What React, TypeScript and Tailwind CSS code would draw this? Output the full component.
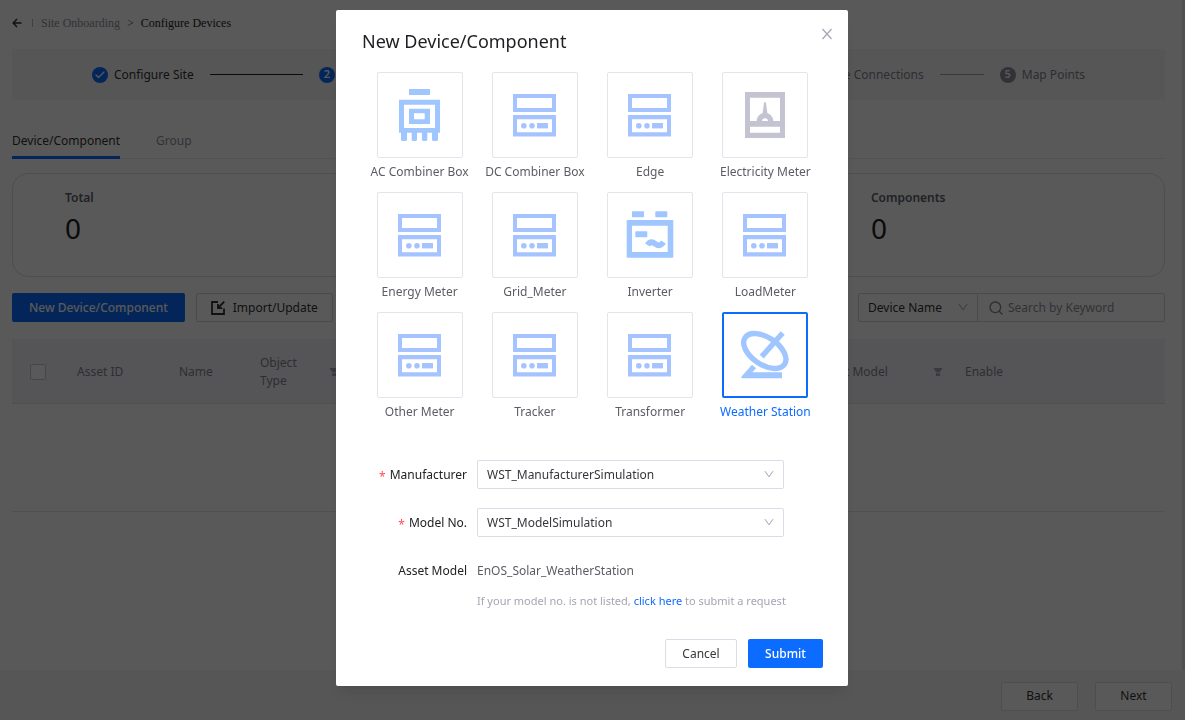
import { useState, type ReactNode } from 'react';
import { Check, Search } from 'lucide-react';

function RackIcon() {
  return (
    <svg viewBox="0 0 60 60" className="size-[60px]" fill="#a5c3ff" aria-hidden="true">
      <path fillRule="evenodd" d="M8 9h43v18H8zM12 13v10h35V13z" />
      <path fillRule="evenodd" d="M8 30h43v21.5H8zM12 34.3v13h35v-13z" />
      <circle cx="18.8" cy="40.8" r="2.8" />
      <circle cx="27" cy="40.8" r="2.8" />
      <path d="M32 38h11v5.400H32z" />
    </svg>
  );
}

function CombinerIcon() {
  return (
    <svg viewBox="0 0 60 60" className="size-[60px]" fill="#9fc6ff" aria-hidden="true">
      <rect x="19" y="4" width="21" height="6" rx="0.5" />
      <path fillRule="evenodd" d="M9 14.700h41v33H9zM14 19.700v23.300h31V19.700z" />
      <path fillRule="evenodd" d="M19 23.700h21V39H19zM24 28.300v6h10.700v-6z" />
      <path d="M11 47h6v8l-1 1h-4l-1-1zM21.700 47H27v8l-1 1h-3.300l-1-1zM31.900 47h5.400v8l-1 1h-3.400l-1-1zM42 47h6v8l-1 1h-4l-1-1z" />
    </svg>
  );
}

function ElectricityIcon() {
  return (
    <svg viewBox="0 0 60 60" className="size-[60px]" fill="#c4c3d1" aria-hidden="true">
      <path fillRule="evenodd" d="M10 7h40v46H10zM15 12.700V36h30V12.700zM15 41.700v6h30v-6z" />
      <path fillRule="evenodd" d="M21.700 36.200c0-4 2.500-7 5.900-8L29 18q1-2 2 0l1.400 10.200c3.400 1 5.900 4 5.900 8H33a3 3 0 0 0-6 0z" />
    </svg>
  );
}

function InverterIcon() {
  return (
    <svg viewBox="0 0 60 60" className="size-[60px]" fill="#9fc6ff" aria-hidden="true">
      <rect x="12" y="6.300" width="12" height="6" rx="0.8" />
      <rect x="35.300" y="6.300" width="12" height="6" rx="0.8" />
      <path fillRule="evenodd" d="M7.500 15h45q.8 0 .8.800v36.200q0 .8-.8.800h-45q-.8 0-.8-.8V15.800q0-.8.800-.8zM12 20.700V47h35.700V20.700z" />
      <rect x="15.300" y="26.300" width="12" height="6" rx="0.8" />
      <path d="M27.500 40c3-4.500 6-2.500 8-1s5 2.500 8-1.800" fill="none" stroke="#9fc6ff" strokeWidth="5.800" />
    </svg>
  );
}

function WeatherIcon() {
  return (
    <svg viewBox="0 0 60 60" className="size-[60px]" fill="#9fc6ff" aria-hidden="true">
      <ellipse cx="29.800" cy="26" rx="23.800" ry="13.600" transform="rotate(34 29.800 26)" fill="none" stroke="#9fc6ff" strokeWidth="5.400" />
      <path d="M26.700 31.600 47.700 8" stroke="#9fc6ff" strokeWidth="5.400" />
      <path d="m17 39.700 4 3.500-3.700 4.100H47v6H7q-1.300-.6-.4-1.800z" />
    </svg>
  );
}

function FilterIcon() {
  return (
    <svg viewBox="0 0 10 10" className="size-2.5" fill="#a8a8b4" aria-hidden="true">
      <path d="M.5 1h9L7 5.200H3zM3 6.200h4V9H3z" />
    </svg>
  );
}

function Caret() {
  return (
    <svg viewBox="0 0 10 10" className="pointer-events-none absolute top-[9px] right-2.5 size-2.5" fill="none" stroke="#a0a0ae" aria-hidden="true">
      <path d="M1 2.200 5 7.800 9 2.200" />
    </svg>
  );
}

const devices: { name: string; icon: ReactNode }[] = [
  { name: 'AC Combiner Box', icon: <CombinerIcon /> },
  { name: 'DC Combiner Box', icon: <RackIcon /> },
  { name: 'Edge', icon: <RackIcon /> },
  { name: 'Electricity Meter', icon: <ElectricityIcon /> },
  { name: 'Energy Meter', icon: <RackIcon /> },
  { name: 'Grid_Meter', icon: <RackIcon /> },
  { name: 'Inverter', icon: <InverterIcon /> },
  { name: 'LoadMeter', icon: <RackIcon /> },
  { name: 'Other Meter', icon: <RackIcon /> },
  { name: 'Tracker', icon: <RackIcon /> },
  { name: 'Transformer', icon: <RackIcon /> },
  { name: 'Weather Station', icon: <WeatherIcon /> },
];

const steps = ['Configure Site', 'Configure Devices', 'Configure Edge', 'Configure Connections', 'Map Points'];

function Steps() {
  return (
    <ol className="flex h-[51px] items-center bg-[#f7f7f8] px-20">
      {steps.map((label, i) => {
        const last = i === steps.length - 1;
        const reached = i < 2;
        return (
          <li key={label} className={last ? 'flex items-center' : 'mr-4 flex flex-1 items-center'}>
            <span
              className={
                reached
                  ? 'flex size-4 shrink-0 items-center justify-center rounded-full bg-[#0b6cff] text-[11px] font-semibold text-white'
                  : 'flex size-4 shrink-0 items-center justify-center rounded-full bg-[#8f8f9c] text-[11px] font-semibold text-white'
              }
            >
              {i === 0 ? <Check className="size-3" strokeWidth={2.5} /> : i + 1}
            </span>
            <span className={reached ? 'ml-1.5 whitespace-nowrap text-[#333]' : 'ml-1.5 whitespace-nowrap text-[#82828f]'}>
              {label}
            </span>
            {!last && <span className={i === 0 ? 'ml-4 h-px flex-1 bg-[#222]' : 'ml-4 h-px flex-1 bg-[#a5a5b0]'} />}
          </li>
        );
      })}
    </ol>
  );
}

function Page() {
  return (
    <div className="flex h-screen flex-col bg-white">
      <main className="min-h-0 flex-1 overflow-hidden border-r-3 border-[#e6e6e6] pr-[17px] pl-3">
        <nav className="flex h-[49px] items-center pb-1 font-['Liberation_Serif',serif] text-xs">
          <a href="#back" aria-label="Back to sites">
            <svg viewBox="0 0 10 10" className="size-2.5" fill="none" stroke="#333" strokeWidth="1.500" aria-hidden="true">
              <path d="M9.500 5H1.500M5 1 1.200 5 5 9" />
            </svg>
          </a>
          <span className="mr-2 ml-2.5 h-2 w-px bg-[#bbb]" />
          <a href="#site" className="text-[#90909c]">Site Onboarding</a>
          <span className="mx-[7px] text-[#444]">&gt;</span>
          <span className="text-[#222]">Configure Devices</span>
        </nav>
        <Steps />
        <div role="tablist" className="mt-6 flex gap-9 border-b border-[#ececf0]">
          <button role="tab" aria-selected="true" className="-mb-px border-b-3 border-[#0b6cff] pt-[7px] pb-[5px] leading-5 text-[#333]">
            Device/Component
          </button>
          <button role="tab" aria-selected="false" className="pt-1.5 pb-1.5 leading-5 text-[#90909c]">
            Group
          </button>
        </div>
        <section className="mt-3.5 grid h-26 grid-cols-[11fr_11fr_8fr] rounded-2xl border border-[#dedee6] pt-3.5 pl-13">
          {['Total', 'Devices', 'Components'].map((label) => (
            <div key={label}>
              <div className="leading-5 font-semibold text-[#60606c]">{label}</div>
              <div className="text-[28px] leading-10 text-[#222]">0</div>
            </div>
          ))}
        </section>
        <div className="mt-4 flex items-center">
          <button className="h-[29px] rounded-xs bg-[#0b6cff] px-[17px] font-medium text-white">New Device/Component</button>
          <button className="ml-[11px] flex h-[29px] items-center gap-2 rounded-xs border border-[#d5d5de] px-3.5 text-[#333]">
            <svg viewBox="0 0 14 14" className="size-3.5" fill="none" stroke="#333" strokeWidth="1.800" aria-hidden="true">
              <path d="M7 1H1v12h12V7.500M13.300.7 7.500 6.500M7 3v4.200h4.200" />
            </svg>
            Import/Update
          </button>
          <div className="relative ml-auto">
            <select aria-label="Search field" className="h-[29px] w-30 appearance-none rounded-l-xs border border-[#d5d5de] pl-[9px] text-[#333]">
              <option>Device Name</option>
            </select>
            <Caret />
          </div>
          <label className="-ml-px flex h-[29px] w-47 items-center gap-1 rounded-r-xs border border-[#d5d5de] px-2.5">
            <Search className="size-4 shrink-0 text-[#85858f]" strokeWidth={2} />
            <input aria-label="Search" placeholder="Search by Keyword" className="min-w-0 flex-1 outline-none placeholder:text-[#90909c]" />
          </label>
        </div>
        <table className="mt-[17px] w-full table-fixed border-collapse text-left text-[#85858f]">
          <colgroup>
            <col className="w-13" />
            <col className="w-[102px]" />
            <col className="w-[81px]" />
            <col className="w-[105px]" />
            <col />
            <col />
            <col />
            <col className="w-[146px]" />
            <col className="w-[213px]" />
          </colgroup>
          <thead>
            <tr className="h-16 border-b border-[#e4e4ea] bg-[#f3f3f8]">
              <th className="pt-0.5 pl-[18px]">
                <input type="checkbox" aria-label="Select all" className="block size-4 appearance-none rounded-xs border border-[#c8c8d2] bg-white" />
              </th>
              <th className="px-[13px] pt-0.5 font-normal">Asset ID</th>
              <th className="px-[13px] pt-0.5 font-normal">Name</th>
              <th className="px-[13px] pt-0.5 font-normal">
                <div className="flex items-center justify-between leading-[18px]">
                  <span className="w-12">Object Type</span>
                  <FilterIcon />
                </div>
              </th>
              <th className="px-[13px] pt-0.5 font-normal">Capacity</th>
              <th className="px-[13px] pt-0.5 font-normal">Manufacturer</th>
              <th className="px-[13px] pt-0.5 font-normal">Model No.</th>
              <th className="px-[13px] pt-0.5 font-normal whitespace-nowrap">
                <div className="-mr-1 flex items-center justify-between">
                  Asset Model
                  <FilterIcon />
                </div>
              </th>
              <th className="px-[13px] pt-0.5 font-normal">Enable</th>
            </tr>
          </thead>
          <tbody>
            <tr className="h-27 border-b border-[#e4e4ea]">
              <td colSpan={9} className="text-center">No Data</td>
            </tr>
          </tbody>
        </table>
      </main>
      <footer className="flex h-[50px] items-center justify-end gap-[17px] bg-[#f7f7f8] pt-0.5 pr-[13px]">
        <button className="h-[29px] w-[77px] rounded-xs border border-[#e0e0e6] bg-white text-[#333]">Back</button>
        <button className="h-[29px] w-[77px] rounded-xs border border-[#e0e0e6] bg-white text-[#333]">Next</button>
      </footer>
    </div>
  );
}

function FormSelect({ id, label, value }: { id: string; label: string; value: string }) {
  return (
    <>
      <label htmlFor={id} className="flex items-center justify-end gap-1 text-[#222226]">
        <span className="pt-1 text-xs leading-none text-[#ff4d4f]">*</span>
        {label}
      </label>
      <div className="relative w-[307px]">
        <select id={id} className="block h-[29px] w-full appearance-none rounded-xs border border-[#dcdce6] bg-white pl-[9px] text-[#36363c]">
          <option>{value}</option>
        </select>
        <Caret />
      </div>
    </>
  );
}

function DeviceDialog() {
  const [selected, setSelected] = useState('Weather Station');
  return (
    <div role="dialog" aria-modal="true" aria-labelledby="dialog-title" className="w-[512px] rounded-xs bg-white pt-[17px] pr-[25px] pb-[18px] pl-[26px] shadow-lg">
      <header className="flex items-start justify-between">
        <h1 id="dialog-title" className="text-lg leading-7 text-[#1f1f23]">New Device/Component</h1>
        <button aria-label="Close" className="-mr-2.5 pt-px text-[#a5a5b4]">
          <svg viewBox="0 0 12 12" className="size-3" fill="none" stroke="currentColor" strokeWidth="1.200" aria-hidden="true">
            <path d="m1.500 1 9 10M10.500 1l-9 10" />
          </svg>
        </button>
      </header>
      <fieldset className="mt-[17px] grid grid-cols-4 gap-y-1.5">
        <legend className="sr-only">Device type</legend>
        {devices.map(({ name, icon }) => {
          const active = name === selected;
          return (
            <label key={name} className="relative flex cursor-pointer flex-col items-center whitespace-nowrap">
              <input type="radio" name="device" className="sr-only" checked={active} onChange={() => setSelected(name)} />
              <span
                className={
                  active
                    ? 'flex size-[86px] items-center justify-center rounded-xs border-2 border-[#0b6cff]'
                    : 'flex size-[86px] items-center justify-center rounded-xs border border-[#e4e4ec]'
                }
              >
                {icon}
              </span>
              <span className={active ? 'leading-7 text-[#0b6cff]' : 'leading-7 text-[#5c5c64]'}>{name}</span>
            </label>
          );
        })}
      </fieldset>
      <form onSubmit={(e) => e.preventDefault()} className="mt-[34px]">
        <div className="grid grid-cols-[105px_1fr] items-center gap-x-2.5 gap-y-[19px]">
          <FormSelect id="manufacturer" label="Manufacturer" value="WST_ManufacturerSimulation" />
          <FormSelect id="model" label="Model No." value="WST_ModelSimulation" />
          <span className="text-right leading-[29px] text-[#222226]">Asset Model</span>
          <output className="leading-[29px] text-[#5c5c64]">EnOS_Solar_WeatherStation</output>
        </div>
        <p className="mt-1.5 ml-[115px] text-[11px] leading-5 text-[#a5a5b4]">
          If your model no. is not listed, <a href="#request" className="text-[#0b6cff]">click here</a> to submit a request
        </p>
        <div className="mt-7 flex justify-end gap-[11px]">
          <button type="button" className="h-[29px] w-18 rounded-xs border border-[#dcdce6] text-[#36363c]">Cancel</button>
          <button type="submit" className="h-[29px] w-[75px] rounded-xs bg-[#0b6cff] font-medium text-white">Submit</button>
        </div>
      </form>
    </div>
  );
}

export default function App() {
  return (
    <div className="font-['Noto_Sans',sans-serif] text-[12px]">
      <Page />
      <div className="fixed inset-0 flex items-start justify-center overflow-hidden bg-black/65 pt-2.5 pr-px">
        <DeviceDialog />
      </div>
    </div>
  );
}
